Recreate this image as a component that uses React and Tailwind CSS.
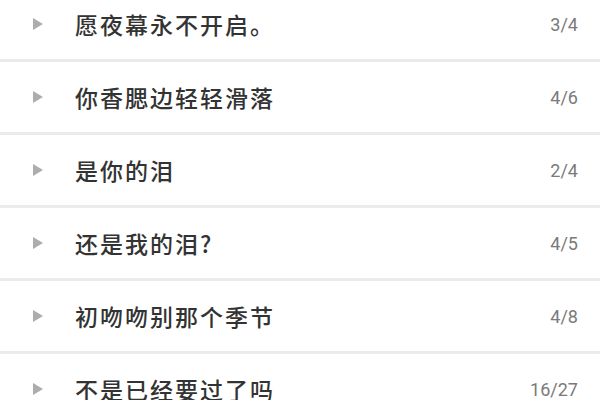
const LINES = [
  { text: "愿夜幕永不开启。", pos: "3/4" },
  { text: "你香腮边轻轻滑落", pos: "4/6" },
  { text: "是你的泪", pos: "2/4" },
  { text: "还是我的泪?", pos: "4/5" },
  { text: "初吻吻别那个季节", pos: "4/8" },
  { text: "不是已经要过了吗", pos: "16/27" },
];

function Arrow() {
  return (
    <svg width="12" height="14" viewBox="0 0 12 14" className="shrink-0">
      <path d="M1 1 L11 7 L1 13 Z" fill="#adadad" />
    </svg>
  );
}

export default function App() {
  return (
    <div className="w-[600px] h-[400px] overflow-hidden bg-white">
      <div className="-mt-[11px]">
        {LINES.map((l, i) => (
          <div key={i} className="border-b-[3px] border-[#ebebeb]">
            <div className="h-[70px] flex items-center pl-[32px] pr-[22px]">
              <Arrow />
              <span
                className="ml-[31px] flex-1 text-[23px] tracking-[2px] text-[#333] font-medium"
                style={{ fontFamily: '"Noto Sans CJK SC", sans-serif' }}
              >
                {l.text}
              </span>
              <span className="text-[18px] text-[#7a7a7a] font-['Roboto',sans-serif]">{l.pos}</span>
            </div>
          </div>
        ))}
      </div>
    </div>
  );
}
